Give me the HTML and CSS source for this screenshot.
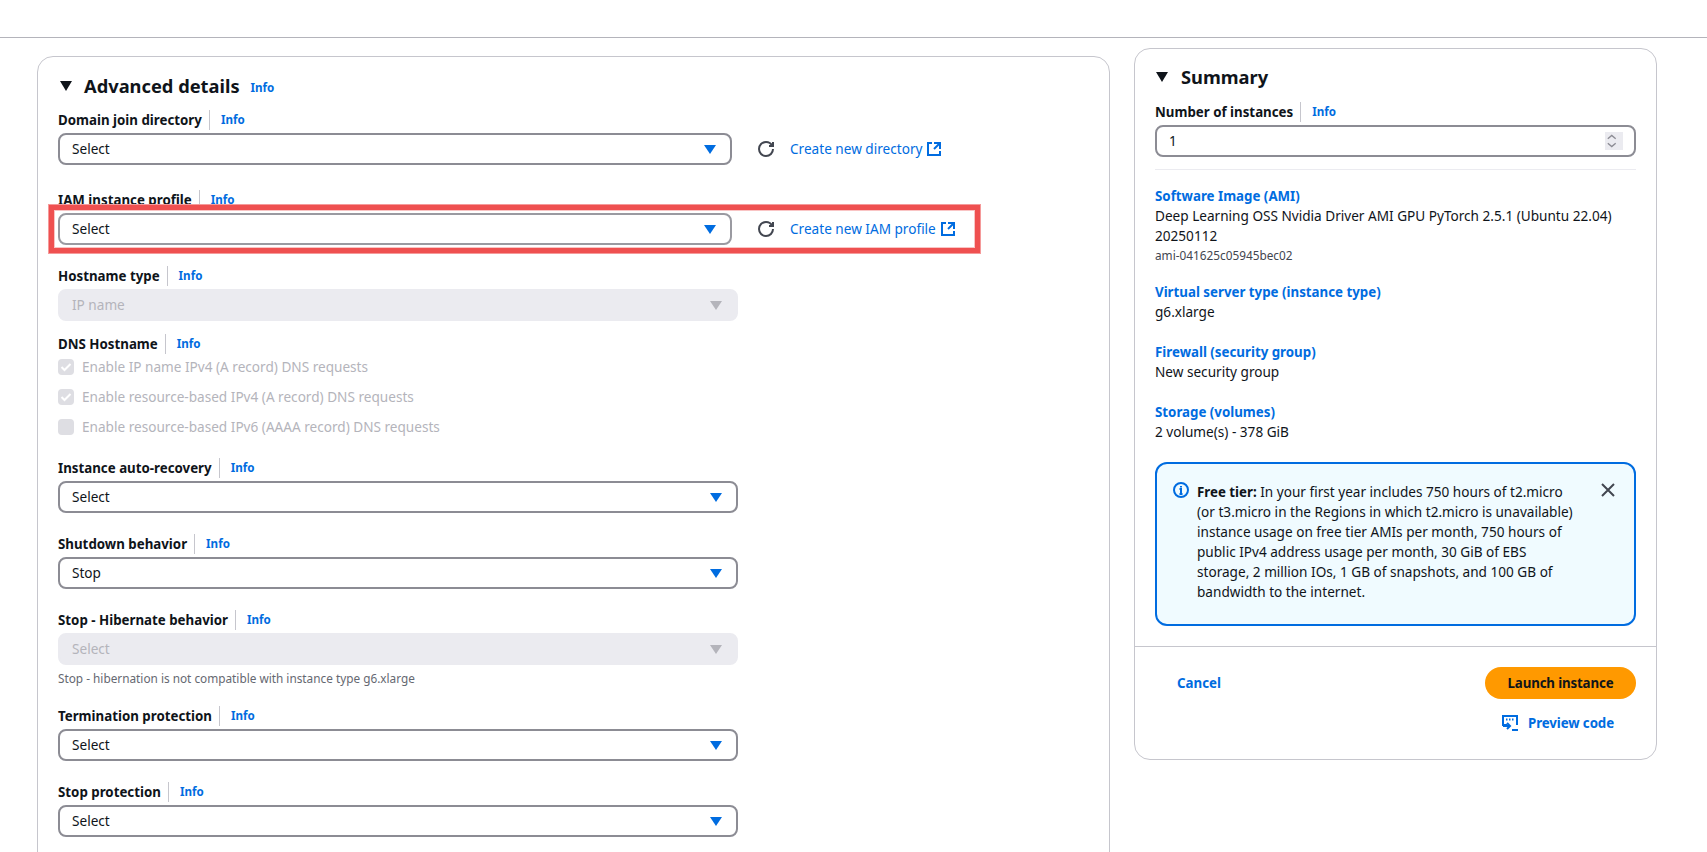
FILE: index.html
```html
<!DOCTYPE html>
<html lang="en">
<head>
<meta charset="utf-8">
<title>Launch an instance</title>
<link rel="stylesheet" href="styles.css">
</head>
<body>
<svg class="defs" width="0" height="0" aria-hidden="true">
  <symbol id="i-refresh" viewBox="0 0 16 16"><path d="M15 8c0 3.87-3.13 7-7 7s-7-3.13-7-7 3.13-7 7-7c2.79 0 5.2 1.63 6.33 4"/><path d="M15 1v4h-4"/></symbol>
  <symbol id="i-ext" viewBox="0 0 16 16"><path d="M14 8.01v-6H8"/><path d="M14.02 2 8 8.01"/><path d="M6 2.01H2v12h12v-3.99"/></symbol>
</svg>
<header class="topbar"></header>
<main class="page">
  <section class="panel left">
    <h2 class="ptitle"><span class="tri"></span>Advanced details<a class="info info-h">Info</a></h2>

    <div class="label"><b>Domain join directory</b><a class="info">Info</a></div>
    <div class="row">
      <div class="select narrow"><span>Select</span><i class="arrow"></i></div>
      <svg class="ic refresh"><use href="#i-refresh"/></svg>
      <a class="link">Create new directory<svg class="ic ext"><use href="#i-ext"/></svg></a>
    </div>

    <div class="label iam"><b>IAM instance profile</b><a class="info">Info</a></div>
    <div class="row highlight">
      <div class="select narrow soft"><span>Select</span><i class="arrow"></i></div>
      <svg class="ic refresh"><use href="#i-refresh"/></svg>
      <a class="link">Create new IAM profile<svg class="ic ext"><use href="#i-ext"/></svg></a>
    </div>

    <div class="label after-hl"><b>Hostname type</b><a class="info">Info</a></div>
    <div class="select disabled"><span>IP name</span><i class="arrow"></i></div>

    <div class="label dns"><b>DNS Hostname</b><a class="info">Info</a></div>
    <div class="checks">
      <div class="check"><span class="box"><svg viewBox="0 0 16 16"><path d="m3.5 8 3 3 6-6"/></svg></span>Enable IP name IPv4 (A record) DNS requests</div>
      <div class="check"><span class="box"><svg viewBox="0 0 16 16"><path d="m3.5 8 3 3 6-6"/></svg></span>Enable resource-based IPv4 (A record) DNS requests</div>
      <div class="check"><span class="box"></span>Enable resource-based IPv6 (AAAA record) DNS requests</div>
    </div>

    <div class="label"><b>Instance auto-recovery</b><a class="info">Info</a></div>
    <div class="select"><span>Select</span><i class="arrow"></i></div>

    <div class="label"><b>Shutdown behavior</b><a class="info">Info</a></div>
    <div class="select"><span>Stop</span><i class="arrow"></i></div>

    <div class="label"><b>Stop - Hibernate behavior</b><a class="info">Info</a></div>
    <div class="select disabled"><span>Select</span><i class="arrow"></i></div>
    <p class="help">Stop - hibernation is not compatible with instance type g6.xlarge</p>

    <div class="label after-help"><b>Termination protection</b><a class="info">Info</a></div>
    <div class="select"><span>Select</span><i class="arrow"></i></div>

    <div class="label"><b>Stop protection</b><a class="info">Info</a></div>
    <div class="select"><span>Select</span><i class="arrow"></i></div>
  </section>

  <aside class="panel summary">
    <h2 class="ptitle stitle"><span class="tri"></span>Summary</h2>
    <div class="label first"><b>Number of instances</b><a class="info">Info</a></div>
    <div class="number"><span>1</span>
      <span class="spin"><svg viewBox="0 0 12 16"><path d="m2.5 6 3.5-3 3.5 3"/><path d="m2.5 10 3.5 3 3.5-3"/></svg></span>
    </div>
    <hr class="sep">
    <dl class="facts">
      <dt><a>Software Image (AMI)</a></dt>
      <dd class="ami">Deep Learning OSS Nvidia Driver AMI GPU PyTorch 2.5.1 (Ubuntu 22.04)<br>20250112<small>ami-041625c05945bec02</small></dd>
      <dt><a>Virtual server type (instance type)</a></dt>
      <dd>g6.xlarge</dd>
      <dt><a>Firewall (security group)</a></dt>
      <dd>New security group</dd>
      <dt><a>Storage (volumes)</a></dt>
      <dd>2 volume(s) - 378 GiB</dd>
    </dl>
    <div class="alert">
      <svg class="a-ic" viewBox="0 0 16 16"><circle cx="8" cy="8" r="7"/><path d="M8 12V7H6.5"/><path d="M6.5 12h3"/><path d="M8 4v1.5"/></svg>
      <p><b>Free tier:</b> In your first year includes 750 hours of t2.micro<br>(or t3.micro in the Regions in which t2.micro is unavailable)<br>instance usage on free tier AMIs per month, 750 hours of<br>public IPv4 address usage per month, 30 GiB of EBS<br>storage, 2 million IOs, 1 GB of snapshots, and 100 GB of<br>bandwidth to the internet.</p>
      <svg class="a-x" viewBox="0 0 16 16"><path d="m2 2 12 12M14 2 2 14"/></svg>
    </div>
    <div class="foot">
      <a class="cancel">Cancel</a>
      <div class="actions">
        <button class="launch" type="button">Launch instance</button>
        <a class="preview"><svg viewBox="0 0 16 16"><path d="M5 10H1V1h14v9"/><path d="M4 4.5h1.5M7 4.5h1.5M10 4.5h1.5"/><path d="M5 8l3 3-3 3"/><path d="M1 11h7"/><path d="M10 15h6"/></svg>Preview code</a>
      </div>
    </div>
  </aside>
</main>
</body>
</html>
```
FILE: styles.css
```css
* { box-sizing: border-box; }
html, body { margin: 0; height: 852px; overflow: hidden; background: #fff; }
body { font-family: "Noto Sans", Arial, sans-serif; font-size: 13.6px; line-height: 20px; color: #0f141a; }
.defs { position: absolute; }
a { color: #006ce0; text-decoration: none; }
b { font-size: 13.3px; font-weight: 700; }

.topbar { height: 38px; border-bottom: 1px solid #b4b4bb; }
.page { display: flex; align-items: flex-start; gap: 24px; padding: 18px 0 0 37px; }

.panel { background: #fff; border: 1px solid #c6c6cd; border-radius: 16px; }
.left { width: 1073px; height: 900px; padding: 17px 20px 0; }
.summary { width: 523px; margin-top: -8px; padding: 16px 20px 26px 20px; }

.ptitle { display: flex; align-items: center; height: 24px; margin: 0 0 11px 2px; font-size: 18.3px; font-weight: 700; line-height: 24px; }
.tri { width: 0; height: 0; margin-right: 12px; border-left: 6px solid transparent; border-right: 6px solid transparent; border-top: 10px solid #0f141a; }
.stitle { margin: 0 0 12px 1px; }
.stitle .tri { margin-right: 13px; }

.info { font-size: 11.6px; font-weight: 700; line-height: 20px; }
.info-h { margin-left: 11px; position: relative; top: 2px; }

.label { display: flex; align-items: center; height: 20px; margin: 20px 0 4px; padding-top: 2px; }
.ptitle + .label, .label.first { margin-top: 0; }
.label b { padding-right: 7px; border-right: 1px solid #c6c6cd; }
.label .info { margin-left: 11px; }
.label.iam { margin: 24px 0 0; }
.label.after-hl { margin-top: 12px; }
.label.dns { margin: 12px 0 6px; }
.label.after-help { margin-top: 17px; }

.select { display: flex; align-items: center; justify-content: space-between; width: 680px; height: 32px; padding: 0 14px 0 12px; background: #fff; border: 2px solid #8c8c94; border-radius: 8px; }
.select.narrow { width: 674px; flex: none; }
.select.soft { border-color: #9a9aa1; }
.arrow { width: 0; height: 0; border-left: 6px solid transparent; border-right: 6px solid transparent; border-top: 9px solid #006ce0; }
.select.disabled { background: #ebebf0; border-color: #ebebf0; color: #b4b4bb; }
.select.disabled .arrow { border-top-color: #b4b4bb; }

.row { display: flex; align-items: center; }
.ic { fill: none; stroke-width: 2; }
.refresh { width: 16px; height: 16px; margin-left: 26px; stroke: #424650; }
.link { display: flex; align-items: center; margin-left: 16px; }
.ext { width: 16px; height: 16px; margin-left: 4px; stroke: #006ce0; }

.highlight { position: relative; width: 931px; margin: -4px 0 0 -9px; padding: 3px 4px; background: #fff; border: 5px solid #ef5050; box-shadow: 0 0 0 1px #f59a9a, inset 0 0 0 1px #f9c4c4; }

.checks { display: flex; flex-direction: column; gap: 14px; }
.check { display: flex; align-items: center; height: 16px; color: #b4b4bb; }
.box { display: flex; width: 16px; height: 16px; margin-right: 8px; background: #dedee3; border-radius: 4px; }
.box svg { fill: none; stroke: #fff; stroke-width: 2; }
.checks + .label { margin-top: 22px; }

.help { margin: 4px 0 0; font-size: 11.8px; line-height: 19px; color: #656871; }

.number { display: flex; align-items: center; justify-content: space-between; height: 32px; padding: 0 11px 0 12px; border: 2px solid #8c8c94; border-radius: 8px; }
.spin { display: flex; width: 18px; height: 18px; background: #ebebf0; }
.spin svg { fill: none; stroke: #8c8c94; stroke-width: 1.2; }
.sep { height: 1px; margin: 12px 0 16px; background: #ebebf0; border: 0; }

.facts { margin: 0; }
.facts dt { font-size: 13.3px; font-weight: 700; }
.facts dd { margin: 0 0 20px; }
.facts dd.ami { margin-bottom: 18px; }
.facts dd small { display: block; font-size: 11.8px; line-height: 18px; color: #424650; }

.alert { display: flex; align-items: flex-start; height: 164px; margin-top: 20px; padding: 18px 0 0 16px; background: #f0fbff; border: 2px solid #006ce0; border-radius: 12px; }
.a-ic { flex: none; width: 16px; height: 16px; fill: none; stroke: #006ce0; stroke-width: 2; }
.alert p { flex: none; width: 385px; margin: 0 0 0 8px; white-space: nowrap; }
.a-x { flex: none; width: 16px; height: 16px; margin: 0 0 0 18px; fill: none; stroke: #424650; stroke-width: 2; }

.foot { display: flex; justify-content: space-between; align-items: flex-start; margin: 20px -20px 0; padding: 20px 20px 0 42px; border-top: 1px solid #c6c6cd; }
.cancel { font-size: 13.3px; font-weight: 700; line-height: 32px; }
.actions { display: flex; flex-direction: column; align-items: flex-end; gap: 14px; }
.launch { width: 151px; height: 32px; padding: 0; background: #ff9900; border: 0; border-radius: 16px; font: 700 13.3px/20px "Noto Sans", Arial, sans-serif; letter-spacing: -.15px; color: #0f141a; }
.preview { display: flex; align-items: center; gap: 10px; margin-right: 22px; font-size: 13.3px; font-weight: 700; letter-spacing: -.1px; }
.preview svg { width: 16px; height: 16px; fill: none; stroke: #006ce0; stroke-width: 2; }
```
